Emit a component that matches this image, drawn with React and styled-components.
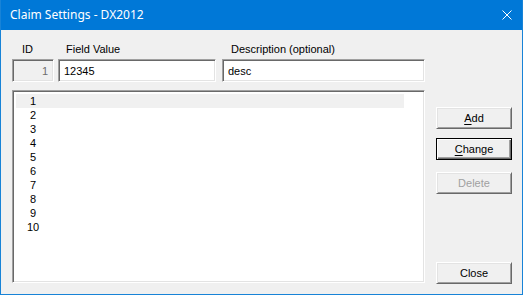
import React from 'react';
import styled, { createGlobalStyle, css } from 'styled-components';

const WIN_BLUE = '#0078d7';
const FACE = '#f0f0f0';
const UI_FONT = '"Liberation Sans", Arial, sans-serif';

const GlobalStyle = createGlobalStyle`
	html, body {
		margin: 0;
		padding: 0;
		background: ${FACE};
	}
	* {
		box-sizing: border-box;
	}
`;

const Window = styled.div`
	width: 523px;
	height: 295px;
	display: flex;
	flex-direction: column;
	background: ${FACE};
	border: 1px solid #1883d7;
	border-top: none;
	font-family: ${UI_FONT};
	font-size: 11px;
	color: #000;
`;

const TitleBar = styled.div`
	height: 30px;
	flex: none;
	display: flex;
	align-items: center;
	justify-content: space-between;
	padding: 0 10px 0 9px;
	background: ${WIN_BLUE};
	color: #fff;
`;

const Title = styled.span`
	font-family: "Noto Sans", "Open Sans", sans-serif;
	font-size: 12px;
	line-height: 16px;
`;

const CloseIcon = styled.svg`
	width: 10px;
	height: 10px;
	display: block;
`;

const Body = styled.div`
	flex: 1;
	display: flex;
	padding: 13px 10px 11px 11px;
`;

const LeftColumn = styled.div`
	width: 413px;
	display: flex;
	flex-direction: column;
`;

const FieldRow = styled.div`
	display: flex;
	margin-bottom: 8px;
`;

const Field = styled.div`
	width: ${p => p.width}px;
	margin-right: ${p => p.gap || 0}px;
	display: flex;
	flex-direction: column;
	gap: 3px;
`;

const Label = styled.label`
	height: 13px;
	line-height: 13px;
	padding-left: ${p => p.indent}px;
	white-space: nowrap;
`;

const sunken = css`
	border: 1px solid;
	border-color: #a0a0a0 #ffffff #ffffff #a0a0a0;
	box-shadow: inset 1px 1px 0 #696969, inset -1px -1px 0 #e3e3e3;
`;

const TextBox = styled.div`
	${sunken};
	height: 23px;
	padding: 0 5px 0 5px;
	display: flex;
	align-items: center;
	justify-content: ${p => (p.right ? 'flex-end' : 'flex-start')};
	background: ${p => (p.disabled ? FACE : '#fff')};
	color: ${p => (p.disabled ? '#6d6d6d' : '#000')};
`;

const List = styled.div`
	${sunken};
	flex: 1;
	background: #fff;
	padding: 3px 3px;
`;

const Row = styled.div`
	width: 388px;
	height: 14px;
	display: flex;
	align-items: center;
	background: ${p => (p.selected ? '#f0f0f0' : 'transparent')};
`;

const RowNumber = styled.span`
	width: 34px;
	text-align: center;
	line-height: 14px;
`;

const ButtonColumn = styled.div`
	width: 76px;
	margin-left: 11px;
	display: flex;
	flex-direction: column;
	padding-top: 64px;
`;

const Button = styled.button`
	height: 22px;
	width: 100%;
	padding: 0;
	font-family: ${UI_FONT};
	font-size: 11px;
	background: ${FACE};
	color: ${p => (p.disabled ? '#a0a0a0' : '#000')};
	border: 1px solid;
	border-color: #ffffff #696969 #696969 #ffffff;
	box-shadow: inset 1px 1px 0 #e3e3e3, inset -1px -1px 0 #a0a0a0;
	margin-top: ${p => p.spacing || 0}px;
	${p => p.isDefault && css`
		border: 1px solid #000;
		box-shadow: inset 1px 1px 0 #ffffff, inset -1px -1px 0 #696969, inset -2px -2px 0 #a0a0a0;
	`}
	${p => p.bottom && css`
		margin-top: auto;
		margin-bottom: -1px;
	`}
	u {
		text-decoration-thickness: 1px;
		text-underline-offset: 2px;
	}
`;

const rows = [1, 2, 3, 4, 5, 6, 7, 8, 9, 10];

export default function App() {
	return (
		<>
			<GlobalStyle />
			<Window>
				<TitleBar>
					<Title>Claim Settings - DX2012</Title>
					<CloseIcon viewBox="0 0 10 10">
						<path d="M0.5 0.5 L9.5 9.5 M9.5 0.5 L0.5 9.5" stroke="#fff" strokeWidth="1" />
					</CloseIcon>
				</TitleBar>
				<Body>
					<LeftColumn>
						<FieldRow>
							<Field width={42} gap={4}>
								<Label indent={10}>ID</Label>
								<TextBox disabled right>1</TextBox>
							</Field>
							<Field width={158} gap={6}>
								<Label indent={8}>Field Value</Label>
								<TextBox>12345</TextBox>
							</Field>
							<Field width={203}>
								<Label indent={9}>Description (optional)</Label>
								<TextBox>desc</TextBox>
							</Field>
						</FieldRow>
						<List>
							{rows.map(n => (
								<Row key={n} selected={n === 1}>
									<RowNumber>{n}</RowNumber>
								</Row>
							))}
						</List>
					</LeftColumn>
					<ButtonColumn>
						<Button><u>A</u>dd</Button>
						<Button isDefault spacing={9}><u>C</u>hange</Button>
						<Button disabled spacing={12}>Delete</Button>
						<Button bottom>Close</Button>
					</ButtonColumn>
				</Body>
			</Window>
		</>
	);
}
